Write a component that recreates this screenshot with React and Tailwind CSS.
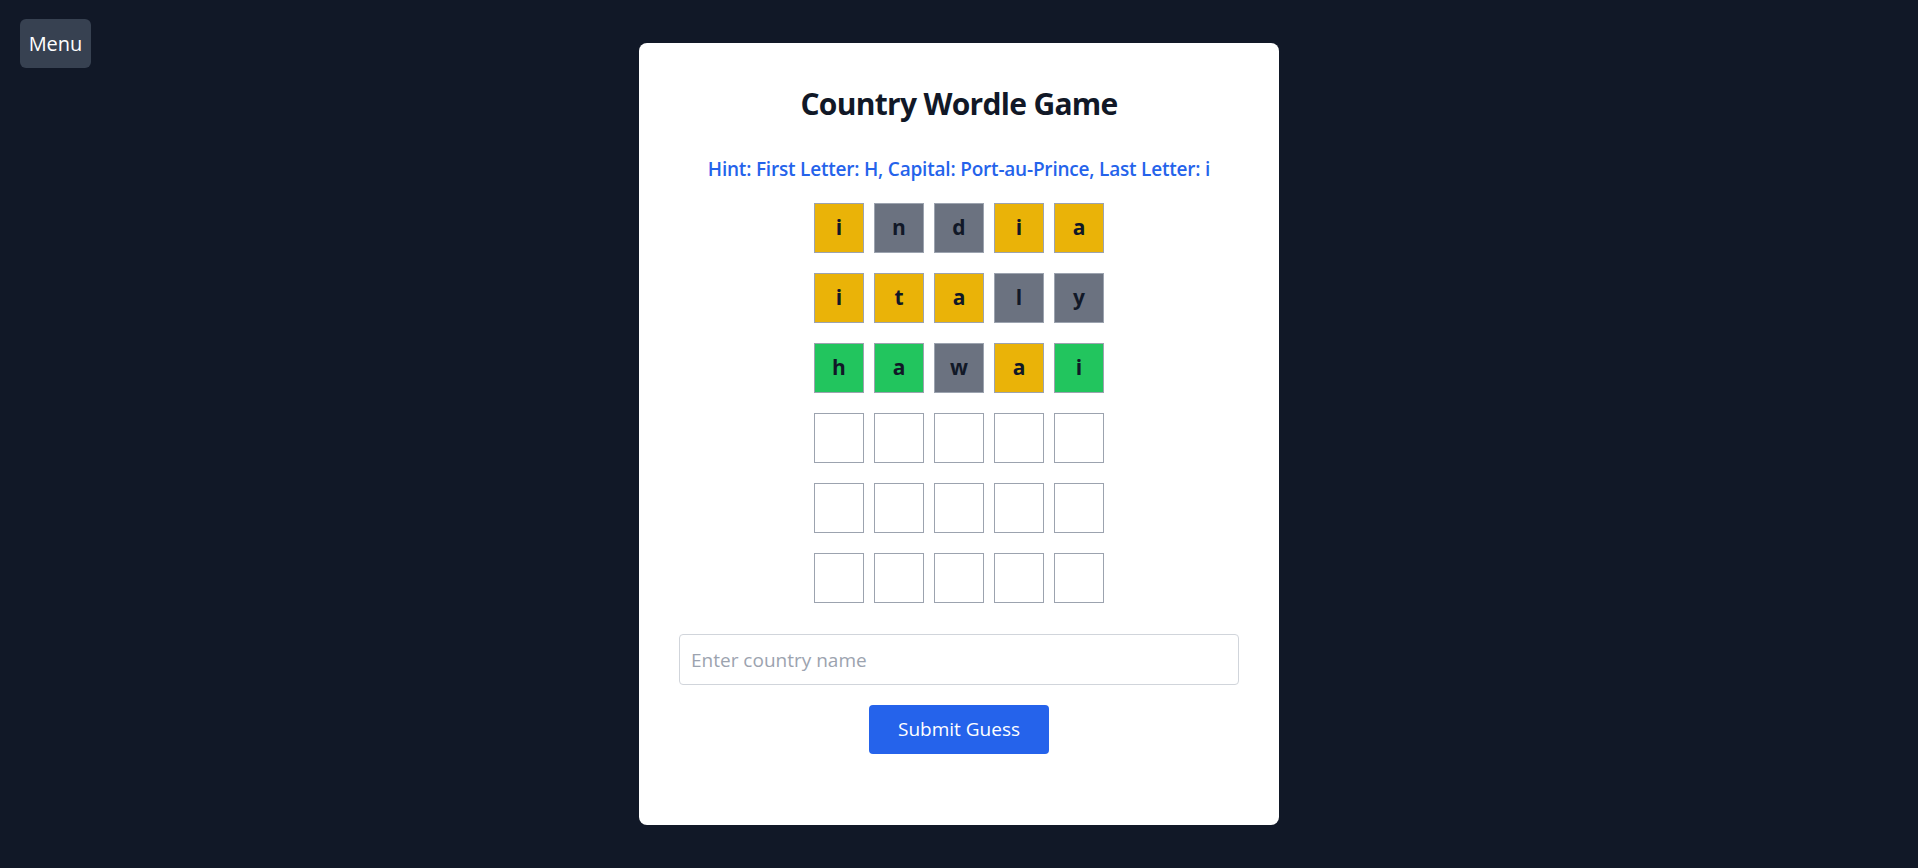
import React from "react";

const rows = [
  [["i", "y"], ["n", "g"], ["d", "g"], ["i", "y"], ["a", "y"]],
  [["i", "y"], ["t", "y"], ["a", "y"], ["l", "g"], ["y", "g"]],
  [["h", "c"], ["a", "c"], ["w", "g"], ["a", "y"], ["i", "c"]],
  [["", "e"], ["", "e"], ["", "e"], ["", "e"], ["", "e"]],
  [["", "e"], ["", "e"], ["", "e"], ["", "e"], ["", "e"]],
  [["", "e"], ["", "e"], ["", "e"], ["", "e"], ["", "e"]],
];

const bg = {
  y: "bg-[#eab308]",
  g: "bg-[#6b7280]",
  c: "bg-[#22c55e]",
  e: "bg-white",
};

export default function App() {
  return (
    <div
      className="relative min-h-screen bg-[#111827] pt-[43px] pb-[43px]"
      style={{ fontFamily: '"Open Sans", "Noto Sans", sans-serif' }}
    >
      <button className="absolute left-5 top-[19px] h-[49px] w-[71px] rounded-md bg-[#374151] text-xl text-white">
        Menu
      </button>

      <div className="mx-auto flex w-[640px] flex-col items-center rounded-lg bg-white px-10 pt-[43px] pb-[71px]">
        <h1 className="text-[30px] leading-9 font-bold tracking-[-0.7px] text-[#111827]">
          Country Wordle Game
        </h1>
        <p className="mt-[33px] text-[19px] leading-7 font-semibold tracking-[-0.2px] text-[#2563eb]">
          Hint: First Letter: H, Capital: Port-au-Prince, Last Letter: i
        </p>

        <div className="mt-5 flex flex-col gap-5">
          {rows.map((row, i) => (
            <div key={i} className="flex gap-[10px]">
              {row.map(([ch, c], j) => (
                <div
                  key={j}
                  className={`flex h-[50px] w-[50px] items-center justify-center border border-[#9ca3af] text-[21px] font-bold text-[#111827] ${bg[c]}`}
                >
                  {ch}
                </div>
              ))}
            </div>
          ))}
        </div>

        <input
          type="text"
          placeholder="Enter country name"
          className="mt-[31px] h-[51px] w-full rounded border border-[#d1d5db] px-[11px] text-[19px] text-[#111827] placeholder:text-[#9ca3af] outline-none"
        />

        <button className="mt-5 h-[49px] w-[180px] rounded bg-[#2563eb] text-[19px] text-white">
          Submit Guess
        </button>
      </div>
    </div>
  );
}
